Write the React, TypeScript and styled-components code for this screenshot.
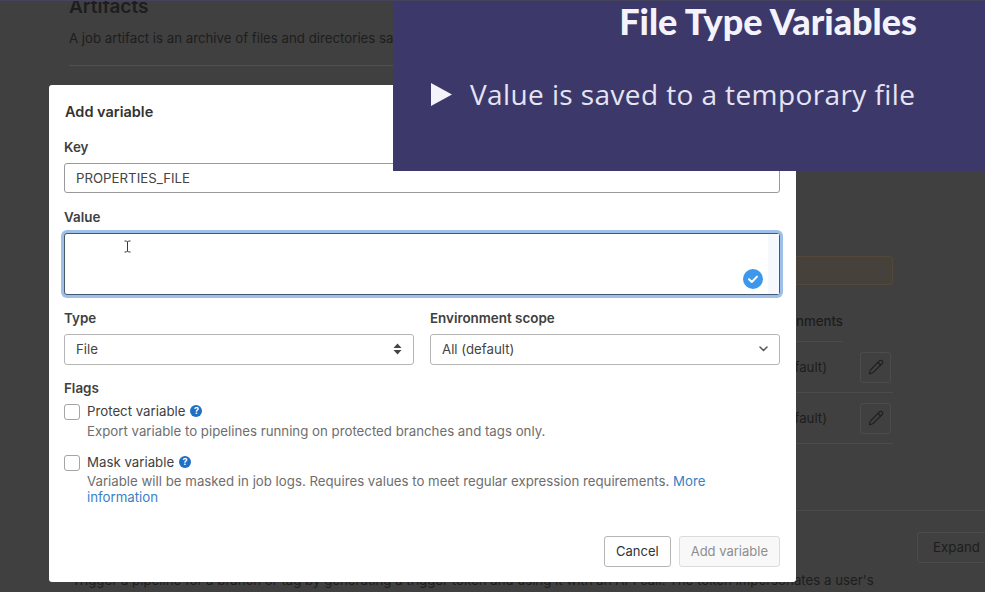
import React from 'react';
import styled, { createGlobalStyle } from 'styled-components';
import { Pencil } from 'lucide-react';

const GlobalStyle = createGlobalStyle`
  html, body {
    margin: 0;
    padding: 0;
    background: #404040;
  }
  * {
    box-sizing: border-box;
  }
`;

const App: React.FC = () => {
  return (
    <>
      <GlobalStyle />
      <StyledPage>
        <StyledSettings>
          <StyledHeading>Artifacts</StyledHeading>
          <StyledParagraph>A job artifact is an archive of files and directories saved by a job when it finishes.</StyledParagraph>
          <StyledRule />
          <StyledAlert />
          <StyledTableHead>Environments</StyledTableHead>
          <VariableRow />
          <VariableRow />
          <StyledSectionRow>
            <StyledExpand>Expand</StyledExpand>
          </StyledSectionRow>
          <StyledTrigger>
            Trigger a pipeline for a branch or tag by generating a trigger token and using it with an API call. The token impersonates a user's
          </StyledTrigger>
        </StyledSettings>

        <StyledModal>
          <StyledTitle>Add variable</StyledTitle>
          <StyledLabel>Key</StyledLabel>
          <StyledInput>PROPERTIES_FILE</StyledInput>
          <StyledLabel $top={16}>Value</StyledLabel>
          <StyledTextarea>
            <StyledCaret width="9" height="13" viewBox="0 0 9 13">
              <path d="M1.5 1h2l1 1 1-1h2M4.5 2v9M1.5 12h2l1-1 1 1h2" fill="none" stroke="#3a3a3a" strokeWidth="1" />
            </StyledCaret>
            <StyledGutter />
            <StyledCheckBadge width="20" height="20" viewBox="0 0 20 20">
              <circle cx="10" cy="10" r="10" fill="#3d97ea" />
              <path d="M6 10.3l2.8 2.7L14 7.6" fill="none" stroke="#fff" strokeWidth="2" strokeLinecap="round" strokeLinejoin="round" />
            </StyledCheckBadge>
          </StyledTextarea>
          <StyledTwoCols>
            <div>
              <StyledLabel>Type</StyledLabel>
              <StyledSelect>
                File
                <svg width="9" height="12" viewBox="0 0 9 12">
                  <path d="M4.5 0.5L8.5 5H0.5zM4.5 11.5L0.5 7H8.5z" fill="#444" />
                </svg>
              </StyledSelect>
            </div>
            <div>
              <StyledLabel>Environment scope</StyledLabel>
              <StyledSelect>
                All (default)
                <svg width="9" height="6" viewBox="0 0 9 6">
                  <path d="M1 1l3.5 3.5L8 1" fill="none" stroke="#555" strokeWidth="1.5" strokeLinecap="round" strokeLinejoin="round" />
                </svg>
              </StyledSelect>
            </div>
          </StyledTwoCols>
          <StyledFlagsLabel>Flags</StyledFlagsLabel>
          <StyledFlag>
            <StyledCheckbox />
            <div>
              <StyledFlagName>
                Protect variable <HelpIcon />
              </StyledFlagName>
              <StyledHelp>Export variable to pipelines running on protected branches and tags only.</StyledHelp>
            </div>
          </StyledFlag>
          <StyledFlag>
            <StyledCheckbox />
            <div>
              <StyledFlagName>
                Mask variable <HelpIcon />
              </StyledFlagName>
              <StyledHelp>
                Variable will be masked in job logs. Requires values to meet regular expression requirements. <StyledLink>More information</StyledLink>
              </StyledHelp>
            </div>
          </StyledFlag>
          <StyledFooter>
            <StyledButton>Cancel</StyledButton>
            <StyledButton $disabled>Add variable</StyledButton>
          </StyledFooter>
        </StyledModal>

        <StyledBanner>
          <StyledBannerTitle>File Type Variables</StyledBannerTitle>
          <StyledBullet>
            <svg width="21" height="23" viewBox="0 0 21 23">
              <path d="M0 0L21 11.5L0 23z" fill="#f4f3fb" />
            </svg>
            Value is saved to a temporary file
          </StyledBullet>
        </StyledBanner>
      </StyledPage>
    </>
  );
};

export default App;

const VariableRow: React.FC = () => (
  <StyledTableRow>
    <StyledScope>All (default)</StyledScope>
    <StyledEdit>
      <Pencil size={16} strokeWidth={1.6} />
    </StyledEdit>
  </StyledTableRow>
);

const HelpIcon: React.FC = () => (
  <StyledHelpIcon>?</StyledHelpIcon>
);

const StyledPage = styled.div`
  position: relative;
  width: 985px;
  height: 592px;
  overflow: hidden;
  background: #404040;
  border-top: 1px solid #45435c;
  font-family: Inter, 'Liberation Sans', sans-serif;
`;

const StyledSettings = styled.div`
  width: 824px;
  margin-left: 69px;
  color: #1d1d1d;
  font-size: 13.25px;
`;

const StyledHeading = styled.div`
  margin-top: -6px;
  height: 24px;
  line-height: 24px;
  font-size: 19px;
  font-weight: 600;
`;

const StyledParagraph = styled.div`
  margin-top: 10px;
  line-height: 18px;
  white-space: nowrap;
`;

const StyledRule = styled.div`
  margin-top: 18px;
  border-top: 1px solid #4f4f4f;
`;

const StyledAlert = styled.div`
  margin-top: 190px;
  height: 29px;
  border: 1px solid #54483a;
  border-radius: 3px;
  background: #46413b;
`;

const StyledTableHead = styled.div`
  width: 774px;
  height: 57px;
  padding-top: 27px;
  border-bottom: 1px solid #4b4b4b;
  text-align: right;
  font-weight: 500;
  line-height: 18px;
`;

const StyledTableRow = styled.div`
  display: flex;
  justify-content: flex-end;
  align-items: center;
  gap: 33px;
  height: 51px;
  border-bottom: 1px solid #4b4b4b;
  color: #1d1d1d;
`;

const StyledScope = styled.div`
  white-space: nowrap;
`;

const StyledEdit = styled.div`
  display: flex;
  align-items: center;
  justify-content: center;
  width: 31px;
  height: 31px;
  margin-right: 2px;
  border: 1px solid #4c4c4c;
  border-radius: 3px;
  color: #1d1d1d;
`;

const StyledSectionRow = styled.div`
  display: flex;
  justify-content: flex-end;
  width: 916px;
  margin-top: 66px;
  padding-top: 21px;
  border-top: 1px solid #4a4a4a;
`;

const StyledExpand = styled.div`
  flex: none;
  width: 77px;
  height: 31px;
  margin-right: -9px;
  padding-left: 15px;
  border: 1px solid #4c4c4c;
  border-radius: 3px;
  line-height: 29px;
`;

const StyledTrigger = styled.div`
  margin-top: 8px;
  margin-left: 3px;
  line-height: 18px;
  white-space: nowrap;
`;

const StyledModal = styled.div`
  position: absolute;
  left: 49px;
  top: 84px;
  display: flex;
  flex-direction: column;
  width: 747px;
  height: 497px;
  padding: 18px 16px 15px 15px;
  border-radius: 3px;
  background: #fff;
  color: #404040;
  font-size: 13.25px;
`;

const StyledTitle = styled.div`
  height: 18px;
  margin-bottom: 18px;
  padding-left: 1px;
  line-height: 18px;
  font-size: 14.5px;
  font-weight: 600;
  color: #333;
`;

const StyledLabel = styled.div<{ $top?: number }>`
  height: 16px;
  margin-top: ${(props) => props.$top || 0}px;
  margin-bottom: 8px;
  line-height: 16px;
  font-size: 13.4px;
  font-weight: 600;
  color: #404040;
`;

const StyledInput = styled.div`
  width: 716px;
  height: 30px;
  padding-left: 11px;
  border: 1px solid #9a9a9a;
  border-radius: 3px;
  line-height: 28px;
  color: #444;
`;

const StyledTextarea = styled.div`
  position: relative;
  width: 716px;
  height: 62px;
  border: 1px solid #47596e;
  border-radius: 3px;
  box-shadow: 0 0 0 3px #9dbfe8;
  background: #fff;
`;

const StyledCaret = styled.svg`
  position: absolute;
  left: 58px;
  top: 6px;
`;

const StyledGutter = styled.div`
  position: absolute;
  right: 0;
  top: 0;
  bottom: 0;
  width: 11px;
  background: #f5f8fc;
`;

const StyledCheckBadge = styled.svg`
  position: absolute;
  right: 16px;
  bottom: 5px;
`;

const StyledTwoCols = styled.div`
  display: grid;
  grid-template-columns: 350px 350px;
  column-gap: 16px;
  margin-top: 15px;
`;

const StyledSelect = styled.div`
  display: flex;
  align-items: center;
  justify-content: space-between;
  height: 31px;
  padding: 0 11px 2px;
  border: 1px solid #b5b5b5;
  border-radius: 3px;
  color: #444;

  svg {
    flex: none;
  }
`;

const StyledFlagsLabel = styled.div`
  height: 16px;
  margin-top: 15px;
  margin-bottom: 7px;
  line-height: 16px;
  font-size: 13.4px;
  font-weight: 600;
  color: #404040;
`;

const StyledFlag = styled.div`
  display: flex;
  gap: 7px;
  margin-bottom: 15px;
`;

const StyledCheckbox = styled.div`
  flex: none;
  width: 16px;
  height: 16px;
  margin-top: 1px;
  border: 1px solid #a5a5a5;
  border-radius: 3px;
  background: #fff;
`;

const StyledFlagName = styled.div`
  display: flex;
  align-items: center;
  gap: 5px;
  height: 16px;
  line-height: 16px;
  color: #404040;
`;

const StyledHelpIcon = styled.span`
  display: inline-block;
  width: 12px;
  height: 12px;
  border-radius: 50%;
  background: #1f6fc4;
  color: #fff;
  font-size: 9px;
  font-weight: 700;
  line-height: 12px;
  text-align: center;
`;

const StyledHelp = styled.div`
  max-width: 630px;
  margin-top: 3.5px;
  line-height: 16px;
  color: #6e6e6e;
`;

const StyledLink = styled.span`
  color: #3a80c6;
`;

const StyledFooter = styled.div`
  display: flex;
  justify-content: flex-end;
  gap: 8px;
  margin-top: auto;
`;

const StyledButton = styled.div<{ $disabled?: boolean }>`
  height: 31px;
  padding: 0 11px;
  border: 1px solid ${(props) => (props.$disabled ? '#dcdcdc' : '#b5b5b5')};
  border-radius: 3px;
  background: ${(props) => (props.$disabled ? '#f8f8f8' : '#fff')};
  color: ${(props) => (props.$disabled ? '#8e8e8e' : '#333')};
  font-size: 13px;
  line-height: 29px;
  white-space: nowrap;
`;

const StyledBanner = styled.div`
  position: absolute;
  left: 393px;
  top: -1px;
  width: 592px;
  height: 171px;
  padding: 3px 68px 0 38px;
  background: #3c3869;
  color: #f4f3fb;
`;

const StyledBannerTitle = styled.div`
  height: 36px;
  line-height: 36px;
  font-family: Lato, sans-serif;
  font-size: 36px;
  font-weight: 900;
  text-align: right;
  white-space: nowrap;
`;

const StyledBullet = styled.div`
  display: flex;
  align-items: center;
  gap: 18px;
  margin-top: 37px;
  font-family: 'Open Sans', sans-serif;
  font-size: 28px;
  line-height: 36px;
  letter-spacing: 0.4px;
  white-space: nowrap;
  color: #e6e4f3;

  svg {
    flex: none;
  }
`;
